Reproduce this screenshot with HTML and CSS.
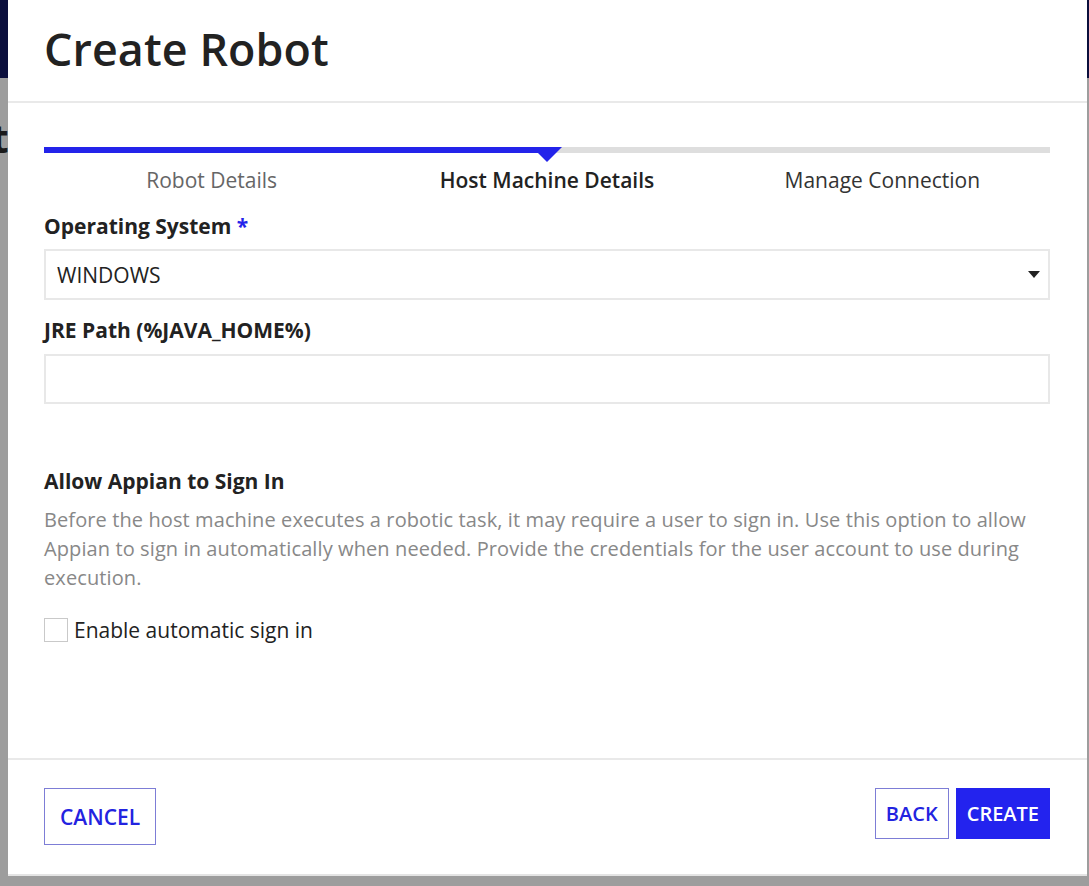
FILE: index.html
```html
<!DOCTYPE html>
<html lang="en">
<head>
<meta charset="utf-8">
<title>Create Robot</title>
<link rel="stylesheet" href="styles.css">
</head>
<body>
<div class="backdrop">
  <div class="page-topbar"></div>
  <div class="page-heading">Robot</div>
</div>
<div class="modal">
  <header class="modal-header">
    <h1 class="modal-title">Create Robot</h1>
  </header>
  <main class="modal-body">
    <div class="progress">
      <div class="progress-track">
        <div class="progress-fill"></div>
        <div class="progress-pointer"></div>
      </div>
      <div class="steps">
        <div class="step step-done">Robot Details</div>
        <div class="step step-current">Host Machine Details</div>
        <div class="step step-next">Manage Connection</div>
      </div>
    </div>

    <div class="field field-os">
      <div class="field-label">Operating System <span class="required">*</span></div>
      <div class="select">
        <span class="select-value">WINDOWS</span>
        <span class="caret"></span>
      </div>
    </div>

    <div class="field field-jre">
      <div class="field-label">JRE Path (%JAVA_HOME%)</div>
      <div class="text-input"></div>
    </div>

    <section class="signin">
      <div class="field-label">Allow Appian to Sign In</div>
      <p class="instructions">Before the host machine executes a robotic task, it may require a user to sign in. Use this option to allow Appian to sign in automatically when needed. Provide the credentials for the user account to use during execution.</p>
      <label class="checkbox-row">
        <span class="checkbox"></span>
        <span class="checkbox-label">Enable automatic sign in</span>
      </label>
    </section>
  </main>
  <footer class="modal-footer">
    <button class="btn btn-secondary btn-cancel">CANCEL</button>
    <div class="footer-right">
      <button class="btn btn-secondary btn-back">BACK</button>
      <button class="btn btn-primary">CREATE</button>
    </div>
  </footer>
</div>
</body>
</html>
```

FILE: styles.css
```css
* { box-sizing: border-box; }

html, body {
  margin: 0;
  padding: 0;
  height: 100%;
}

body {
  background: #9d9d9d;
  font-family: "Open Sans", "Noto Sans", sans-serif;
  color: #222;
  overflow: hidden;
  position: relative;
}

.backdrop {
  height: 100%;
}

.page-topbar {
  height: 78px;
  background: #0b0f3d;
}

.page-heading {
  font-family: "Open Sans", sans-serif;
  font-weight: 700;
  font-size: 40px;
  line-height: 1;
  color: #1a1a1a;
  margin-top: 40px;
  margin-left: -110px;
}

.modal {
  position: absolute;
  left: 8px;
  top: 0;
  width: 1079px;
  height: 876px;
  background: #fff;
  border-bottom: 2px solid #e4e4e4;
  display: flex;
  flex-direction: column;
}

.modal-header {
  height: 103px;
  border-bottom: 2px solid #e9e9e9;
  padding: 0 37px 0 36px;
  display: flex;
  align-items: center;
}

.modal-title {
  margin: 0;
  font-size: 44.8px;
  font-weight: 600;
  color: #222;
  line-height: 1;
  letter-spacing: 0.1px;
  padding-bottom: 3px;
}

.modal-body {
  flex: 1;
  padding: 44px 37px 0 36px;
}

.progress-track {
  position: relative;
  height: 6px;
  background: #dedede;
}

.progress-fill {
  width: 50%;
  height: 6px;
  background: #2323ea;
}

.progress-pointer {
  position: absolute;
  left: calc(50% - 15px);
  top: 0;
  width: 30px;
  height: 15px;
  background: #2323ea;
  clip-path: polygon(0 0, 100% 0, 50% 100%);
}

.steps {
  display: grid;
  grid-template-columns: 1fr 1fr 1fr;
  margin-top: 13px;
}

.step {
  text-align: center;
  font-size: 21px;
  line-height: 28px;
}

.step-done { color: #666; }
.step-current { font-weight: 600; color: #222; }
.step-next { color: #333; }

.field-os { margin-top: 18px; }
.field-jre { margin-top: 16px; }

.field-label {
  font-size: 21px;
  font-weight: 700;
  line-height: 28px;
  color: #222;
}

.required {
  color: #2323ea;
}

.select {
  margin-top: 9px;
  height: 51px;
  border: 2px solid #e8e8e8;
  display: flex;
  align-items: center;
  justify-content: space-between;
  padding: 0 8px 0 11px;
}

.select-value {
  font-size: 21px;
  color: #222;
}

.caret {
  width: 0;
  height: 0;
  border-left: 6.5px solid transparent;
  border-right: 6.5px solid transparent;
  border-top: 7px solid #222;
}

.text-input {
  margin-top: 10px;
  height: 50px;
  border: 2px solid #e8e8e8;
}

.signin {
  margin-top: 63px;
}

.instructions {
  margin: 10px 0 0;
  font-size: 20px;
  letter-spacing: 0.1px;
  line-height: 29px;
  color: #888;
}

.checkbox-row {
  display: flex;
  align-items: center;
  margin-top: 24px;
  gap: 6px;
}

.checkbox {
  width: 24px;
  height: 24px;
  border: 1px solid #c9c9c9;
  background: #fff;
}

.checkbox-label {
  font-size: 21px;
  color: #222;
  line-height: 28px;
}

.modal-footer {
  border-top: 2px solid #e9e9e9;
  height: 116px;
  padding: 28px 37px 0 36px;
  display: flex;
  justify-content: space-between;
  align-items: flex-start;
}

.footer-right {
  display: flex;
  gap: 7px;
}

.btn {
  font-family: "Open Sans", "Noto Sans", sans-serif;
  font-size: 20px;
  font-weight: 600;
  height: 51px;
  padding: 0 10px;
  cursor: pointer;
  margin: 0;
  white-space: nowrap;
}

.btn-secondary {
  background: #fff;
  color: #2323e0;
  border: 1px solid #7d7dd6;
}

.btn-cancel {
  font-size: 21px;
  height: 57px;
  padding: 1px 15px 0;
}

.btn-back {
  padding: 0 10px;
}

.btn-primary {
  background: #2323ee;
  color: #fff;
  border: 1px solid #2323ee;
  padding: 0 10px;
}
```
